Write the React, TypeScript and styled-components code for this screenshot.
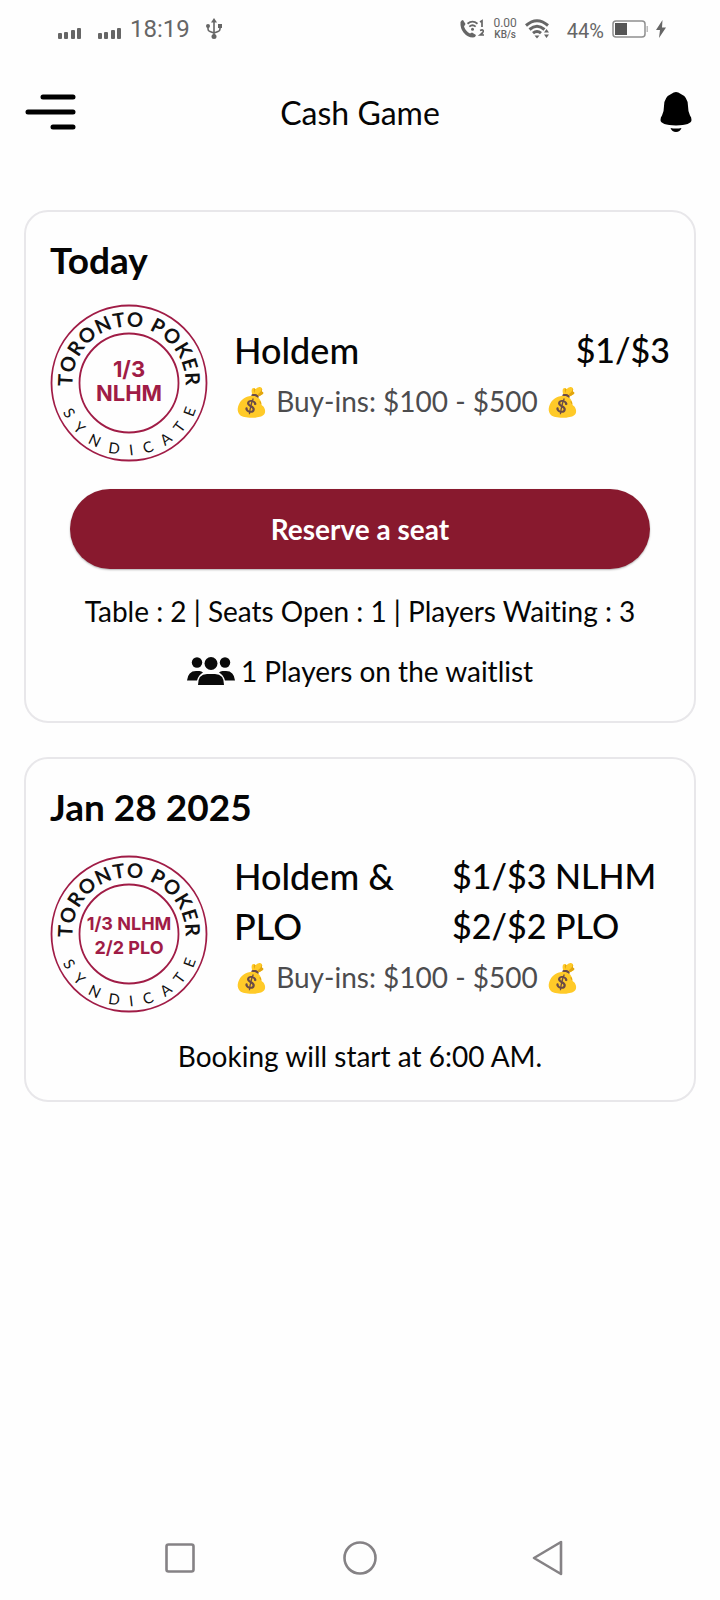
import React from "react";
import styled, { createGlobalStyle } from "styled-components";

const GlobalStyle = createGlobalStyle`
  * {
    box-sizing: border-box;
  }

  body {
    margin: 0;
    background-color: #fefefe;
    color: #050505;
    font-family: Lato, "Noto Sans", sans-serif;
    font-variant-ligatures: none;
  }

  h1, h2, h3, p {
    margin: 0;
    font-weight: 400;
  }

  svg {
    display: block;
    flex: none;
  }
`;

const Screen = styled.div`
  min-height: 100vh;
  display: flex;
  flex-direction: column;
`;

const StatusBar = styled.div`
  height: 56px;
  padding: 2px 54px 0 58px;
  display: flex;
  align-items: center;
  justify-content: space-between;
  color: #666;
  font-family: Roboto, sans-serif;
`;

const StatusGroup = styled.div<{ $gap: number }>`
  display: flex;
  align-items: center;
  gap: ${({ $gap }) => $gap}px;
`;

const Clock = styled.span`
  font-size: 24px;
  line-height: 28px;
`;

const Speed = styled.span`
  display: flex;
  flex-direction: column;
  align-items: center;
  font-size: 12px;
  line-height: 11px;
`;

const SpeedUnit = styled.span`
  font-size: 10px;
  font-weight: 500;
`;

const Percent = styled.span`
  font-size: 20px;
  line-height: 24px;
  padding-top: 4px;
  margin-left: 8px;
`;

const Header = styled.header`
  height: 112px;
  padding: 0 24px;
  display: grid;
  grid-template-columns: 1fr auto 1fr;
  align-items: center;
`;

const IconButton = styled.button<{ $end?: boolean }>`
  padding: 0;
  border: none;
  background: none;
  color: #000;
  cursor: pointer;
  justify-self: ${({ $end }) => ($end ? "end" : "start")};
`;

const PageTitle = styled.h1`
  padding-top: 2px;
  font-size: 32px;
  line-height: 40px;
`;

const CardList = styled.main`
  padding: 42px 24px 0;
  display: flex;
  flex-direction: column;
  gap: 34px;
`;

const Card = styled.section`
  padding: 26px 24px 26px;
  border: 2px solid #e8e7ea;
  border-radius: 24px;
  display: flex;
  flex-direction: column;
`;

const CardDate = styled.h2`
  font-size: 37px;
  font-weight: 700;
  line-height: 44px;
  margin-bottom: 22px;
`;

const GameRow = styled.div`
  display: flex;
  align-items: center;
  gap: 26px;
`;

const GameDetails = styled.div`
  flex: 1;
  padding-bottom: 14px;
`;

const GameHeading = styled.div`
  display: grid;
  grid-template-columns: 1fr 1fr;
`;

const GameName = styled.h3`
  font-size: 36px;
  font-weight: 500;
  line-height: 50px;
`;

const Stakes = styled.p<{ $align: "left" | "right" }>`
  font-size: 34px;
  font-weight: 500;
  line-height: 50px;
  text-align: ${({ $align }) => $align};
`;

const BuyIns = styled.p`
  font-size: 28px;
  line-height: 52px;
  color: #4c4c4e;
`;

const ReserveButton = styled.button`
  height: 80px;
  margin: 27px 20px 24px;
  border: none;
  border-radius: 40px;
  background-color: #88192e;
  box-shadow: 0 1px 2px rgba(0, 0, 0, 0.3);
  color: #fff;
  font-family: inherit;
  font-size: 28px;
  font-weight: 700;
  cursor: pointer;
`;

const InfoText = styled.p`
  font-size: 28px;
  line-height: 36px;
  text-align: center;
`;

const Waitlist = styled.div`
  height: 48px;
  margin-top: 18px;
  display: flex;
  align-items: center;
  justify-content: center;
  gap: 6px;
`;

const BookingNote = styled.div`
  margin-top: 21px;
`;

const SystemNav = styled.nav`
  height: 84px;
  margin-top: auto;
  display: grid;
  grid-template-columns: repeat(3, 180px);
  justify-content: center;
`;

const NavButton = styled.button`
  padding: 0;
  border: none;
  background: none;
  display: flex;
  align-items: center;
  justify-content: center;
`;

const BadgeText = styled.text`
  fill: #a01c46;
  font-family: Inter, sans-serif;
  font-weight: 700;
  text-anchor: middle;
`;

const RingText = styled.text<{ $size: number; $weight: number; $tracking: number }>`
  fill: #111;
  font-family: Lato, sans-serif;
  font-size: ${({ $size }) => $size}px;
  font-weight: ${({ $weight }) => $weight};
  letter-spacing: ${({ $tracking }) => $tracking}px;
  text-anchor: middle;
`;

function SignalIcon() {
  return (
    <svg width="24" height="24" viewBox="0 0 24 24" fill="currentColor">
      <rect x="0" y="16" width="4" height="6" rx="1" />
      <rect x="6" y="15" width="4" height="7" rx="1" />
      <rect x="13" y="13" width="4" height="9" rx="1" />
      <rect x="19" y="11" width="4" height="11" rx="1" />
    </svg>
  );
}

function UsbIcon() {
  return (
    <svg width="16" height="22" viewBox="0 0 16 22" fill="none" stroke="currentColor" strokeWidth="1.6">
      <path d="M8 3v15M2 8v3q0 2 2 2.6l4 1.4M14 8v3q0 2-2 2.6L8 15" />
      <path d="M8 0l3 4.500H5z" fill="currentColor" stroke="none" />
      <rect x="12" y="6" width="4" height="4" fill="currentColor" stroke="none" />
      <circle cx="2" cy="8" r="2" fill="currentColor" stroke="none" />
      <circle cx="8" cy="18.500" r="2.500" fill="currentColor" stroke="none" />
    </svg>
  );
}

function CallIcon() {
  return (
    <svg width="25" height="20" viewBox="0 0 25 20" fill="none" stroke="currentColor">
      <path
        d="M0.500 3Q1.500 1 3 1L5.500 5L4 7.500Q5.500 12 10 14.500L12 13.500L16 16Q15.500 18.500 13 18.500Q7.500 18.500 3.500 13.500Q0 9 0.500 3Z"
        fill="currentColor"
        stroke="none"
      />
      <path d="M7.500 4.800q5-4.300 10 0M9.300 7.600q3.200-2.700 6.400 0" strokeWidth="1.800" />
      <circle cx="12.500" cy="10.300" r="1.500" fill="currentColor" stroke="none" />
      <path d="M20 3l2-1.200V8M20 11.500q3.600-1.500 3.200 1q-.4 1.500-3 3.500h3.800" strokeWidth="1.700" />
    </svg>
  );
}

function WifiIcon() {
  return (
    <svg width="26" height="20" viewBox="0 0 26 20" fill="none" stroke="currentColor" strokeWidth="3">
      <path d="M1 6.500q11-9.500 22 0M4.500 10.500q7.500-6.500 15 0M8 14.200q4-3.400 8 0" />
      <path d="M9.500 16.500h5L12 19.500zM19 13.500l2.500-3.500 2.500 3.500zM19 15.500h5L21.500 19z" fill="currentColor" stroke="none" />
    </svg>
  );
}

function BatteryIcon() {
  return (
    <svg width="36" height="18" viewBox="0 0 36 18">
      <rect x="1" y="1" width="32" height="16" rx="3" fill="none" stroke="#8f8f8f" strokeWidth="1.500" />
      <rect x="3" y="3" width="12" height="12" fill="#555" />
      <path d="M35.200 6v6" stroke="#aaa" strokeWidth="1.200" />
    </svg>
  );
}

function BoltIcon() {
  return (
    <svg width="10" height="18" viewBox="0 0 10 18" fill="currentColor">
      <path d="M6.500 0L0 10h4L3 18l7-10.500H6z" />
    </svg>
  );
}

function MenuIcon() {
  return (
    <svg width="52" height="38" viewBox="0 0 52 38" stroke="currentColor" strokeWidth="5" strokeLinecap="round">
      <path d="M19 4h30M4 19h45M29 34h20" />
    </svg>
  );
}

function BellIcon() {
  return (
    <svg width="40" height="40" viewBox="0 0 40 40" fill="currentColor">
      <path d="M20 0q2.600 0 4 1.600Q32 5 32 14q0 6 2 9.500Q35.500 25 35.500 28q0 5-15.500 5.500Q4.500 33 4.500 28q0-3 1.500-4.500Q8 20 8 14Q8 5 16 1.600Q17.400 0 20 0Z" />
      <path d="M14.500 36q5.500 1 11 0q-1.500 4-5.500 4t-5.500-4z" />
    </svg>
  );
}

function PlayersIcon() {
  return (
    <svg width="48" height="28" viewBox="0 0 48 28" fill="#0a0a0a">
      <circle cx="10" cy="5.500" r="5.200" />
      <circle cx="38" cy="5.500" r="5.200" />
      <circle cx="24" cy="6.500" r="6.500" />
      <path d="M0 23.500Q1 14 9 14h3.500q2 0 3.500 1.500q-4.500 2.500-6 8z" />
      <path d="M48 23.500Q47 14 39 14h-3.500q-2 0-3.500 1.500q4.500 2.500 6 8z" />
      <path d="M11 28Q11 17 20 17h8q9 0 9 11z" />
    </svg>
  );
}

type Badge = {
  id: string;
  lines: string[];
  size: number;
  top: number;
};

function GameBadge({ id, lines, size, top }: Badge) {
  return (
    <svg width="158" height="158" viewBox="0 0 158 158">
      <defs>
        <path id={`${id}-top`} d="M79 135.500A56.500 56.500 0 0 1 79 22.500A56.500 56.500 0 0 1 79 135.500" />
        <path id={`${id}-bottom`} d="M7 79A72 72 0 0 0 151 79" />
      </defs>
      <g fill="none" stroke="#a01c46" strokeWidth="1.800">
        <circle cx="79" cy="79" r="77.500" />
        <circle cx="79" cy="79" r="49.500" />
      </g>
      <RingText $size={20} $weight={700} $tracking={1}>
        <textPath href={`#${id}-top`} startOffset="50%">TORONTO POKER</textPath>
      </RingText>
      <RingText $size={15} $weight={400} $tracking={11}>
        <textPath href={`#${id}-bottom`} startOffset="53%">SYNDICATE</textPath>
      </RingText>
      {lines.map((line, i) => (
        <BadgeText key={line} x="79" y={top + i * 24} fontSize={size}>
          {line}
        </BadgeText>
      ))}
    </svg>
  );
}

type Game = {
  date: string;
  name: string;
  stakes: string[];
  align: "left" | "right";
  badge: Badge;
  children: React.ReactNode;
};

function GameCard({ date, name, stakes, align, badge, children }: Game) {
  return (
    <Card>
      <CardDate>{date}</CardDate>
      <GameRow>
        <GameBadge {...badge} />
        <GameDetails>
          <GameHeading>
            <GameName>{name}</GameName>
            <Stakes $align={align}>
              {stakes.map((stake) => (
                <React.Fragment key={stake}>
                  {stake}
                  <br />
                </React.Fragment>
              ))}
            </Stakes>
          </GameHeading>
          <BuyIns>💰 Buy-ins: $100 - $500 💰</BuyIns>
        </GameDetails>
      </GameRow>
      {children}
    </Card>
  );
}

export default function App() {
  return (
    <Screen>
      <GlobalStyle />
      <StatusBar>
        <StatusGroup $gap={16}>
          <SignalIcon />
          <StatusGroup $gap={8}>
            <SignalIcon />
            <Clock>18:19</Clock>
          </StatusGroup>
          <UsbIcon />
        </StatusGroup>
        <StatusGroup $gap={8}>
          <CallIcon />
          <Speed>
            0.00
            <SpeedUnit>KB/s</SpeedUnit>
          </Speed>
          <WifiIcon />
          <Percent>44%</Percent>
          <BatteryIcon />
          <BoltIcon />
        </StatusGroup>
      </StatusBar>

      <Header>
        <IconButton aria-label="Menu">
          <MenuIcon />
        </IconButton>
        <PageTitle>Cash Game</PageTitle>
        <IconButton aria-label="Notifications" $end>
          <BellIcon />
        </IconButton>
      </Header>

      <CardList>
        <GameCard
          date="Today"
          name="Holdem"
          stakes={["$1/$3"]}
          align="right"
          badge={{ id: "nlhm", lines: ["1/3", "NLHM"], size: 22, top: 73 }}
        >
          <ReserveButton>Reserve a seat</ReserveButton>
          <InfoText>Table : 2 | Seats Open : 1 | Players Waiting : 3</InfoText>
          <Waitlist>
            <PlayersIcon />
            <InfoText>1 Players on the waitlist</InfoText>
          </Waitlist>
        </GameCard>

        <GameCard
          date="Jan 28 2025"
          name="Holdem & PLO"
          stakes={["$1/$3 NLHM", "$2/$2 PLO"]}
          align="left"
          badge={{ id: "mixed", lines: ["1/3 NLHM", "2/2 PLO"], size: 18, top: 75 }}
        >
          <BookingNote>
            <InfoText>Booking will start at 6:00 AM.</InfoText>
          </BookingNote>
        </GameCard>
      </CardList>

      <SystemNav>
        <NavButton aria-label="Recent apps">
          <svg width="36" height="36" viewBox="0 0 36 36" fill="none" stroke="#858285" strokeWidth="2.600">
            <rect x="4.500" y="4.500" width="27" height="27" rx="2" />
          </svg>
        </NavButton>
        <NavButton aria-label="Home">
          <svg width="36" height="36" viewBox="0 0 36 36" fill="none" stroke="#858285" strokeWidth="2.600">
            <circle cx="18" cy="18" r="15.500" />
          </svg>
        </NavButton>
        <NavButton aria-label="Back">
          <svg width="52" height="36" viewBox="-16 0 52 36" fill="none" stroke="#858285" strokeWidth="2.600" strokeLinejoin="round">
            <path d="M4 18L31 2v32z" />
          </svg>
        </NavButton>
      </SystemNav>
    </Screen>
  );
}
